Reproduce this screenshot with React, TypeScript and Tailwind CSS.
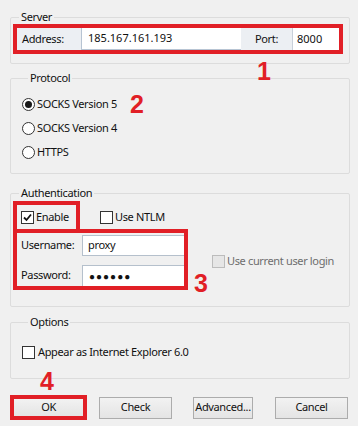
import React from 'react';

const RED = 'border-[#e11f26]';

function Check({ checked, disabled }: { checked?: boolean; disabled?: boolean }) {
    return (
        <span
            className={`w-[13px] h-[13px] shrink-0 border flex items-center justify-center ${
                disabled ? 'border-[#bcbcbc] bg-[#e6e6e6]' : 'border-[#333] bg-white'
            }`}
        >
            {checked && (
                <svg width="9" height="9" viewBox="0 0 9 9">
                    <path d="M1 4.5 L3.5 7 L8 1.5" fill="none" stroke="#111" strokeWidth="1.8" />
                </svg>
            )}
        </span>
    );
}

function Radio({ checked, label }: { checked?: boolean; label: string }) {
    return (
        <div className="h-[24px] flex items-center">
            <span className="w-[13px] h-[13px] shrink-0 rounded-full border border-[#333] bg-white flex items-center justify-center">
                {checked && <span className="w-[7px] h-[7px] rounded-full bg-[#1a1a1a]" />}
            </span>
            <span className="ml-[2px]">{label}</span>
        </div>
    );
}

function Group({ title, className, children }: { title: string; className?: string; children: React.ReactNode }) {
    return (
        <fieldset className={`ml-[10px] w-[340px] border border-[#dcdcdc] rounded-[2px] ${className ?? ''}`}>
            <legend className="ml-[6px] px-[2px] leading-[14px]">{title}</legend>
            {children}
        </fieldset>
    );
}

function Button({ label, className }: { label: string; className?: string }) {
    return (
        <div
            className={`h-[22px] flex items-center justify-center border border-[#acacac] bg-gradient-to-b from-[#f2f2f2] to-[#e4e4e4] ${className ?? ''}`}
        >
            {label}
        </div>
    );
}

export default function App() {
    return (
        <div className="relative w-[358px] h-[426px] bg-[#f0f0f0] pt-[10px] text-[11px] tracking-[-0.35px] text-[#111] whitespace-nowrap font-['Noto_Sans','Liberation_Sans',sans-serif] overflow-hidden">
            {/* Server */}
            <Group title="Server" className="pl-[2px] pr-[6px] pb-[9px]">
                <div className={`border-4 ${RED} flex h-[30px]`}>
                    <div className="w-[64px] bg-[#eceff3] flex items-center pl-[5px]">Address:</div>
                    <div className="w-[160px] bg-white border-l border-b border-[#b7c4d3] flex items-center pl-[6px] tracking-[0px]">
                        185.167.161.193
                    </div>
                    <div className="w-[51px] bg-[#eceff3] flex items-center justify-center">Port:</div>
                    <div className="flex-1 bg-white border-l border-[#c8d0da] flex items-center pl-[4px] tracking-[0px]">8000</div>
                </div>
            </Group>

            {/* Protocol */}
            <Group title="Protocol" className="mt-[7px] pl-[11px] pt-[7px] pb-[9px]">
                <Radio checked label="SOCKS Version 5" />
                <Radio label="SOCKS Version 4" />
                <Radio label="HTTPS" />
            </Group>

            {/* Authentication */}
            <Group title="Authentication" className="mt-[12px] pl-[2px] pt-[1px] pb-[16px]">
                <div className="flex items-start">
                    <div className={`w-[67px] h-[28px] border-t-4 border-l-4 border-r-4 ${RED} flex items-center pl-[4px]`}>
                        <Check checked />
                        <span className="ml-[2px]">Enable</span>
                    </div>
                    <div className="ml-[20px] mt-[4px] h-[24px] flex items-center">
                        <Check />
                        <span className="ml-[2px]">Use NTLM</span>
                    </div>
                </div>
                <div className="flex items-center">
                    <div className={`w-[175px] border-4 ${RED} pt-[2px] flex flex-col gap-[9px]`}>
                        <div className="flex h-[21px]">
                            <div className="w-[65px] flex items-center pl-[4px]">Username:</div>
                            <div className="flex-1 bg-white border border-[#b5c0cc] border-r-0 flex items-center pl-[5px]">proxy</div>
                        </div>
                        <div className="flex h-[21px]">
                            <div className="w-[65px] flex items-center pl-[4px]">Password:</div>
                            <div className="flex-1 bg-white border border-[#b5c0cc] border-r-0 border-b-0 flex items-center pl-[6px] tracking-[1px] text-[10px]">
                                ●●●●●●
                            </div>
                        </div>
                    </div>
                    <div className="ml-[24px] mt-[3px] flex items-center text-[#6d6d6d]">
                        <Check disabled />
                        <span className="ml-[2px]">Use current user login</span>
                    </div>
                </div>
            </Group>

            {/* Options */}
            <Group title="Options" className="mt-[8px] pl-[11px] pt-[11px] pb-[14px]">
                <div className="h-[24px] flex items-center">
                    <Check />
                    <span className="ml-[3px]">Appear as Internet Explorer 6.0</span>
                </div>
            </Group>

            {/* Buttons */}
            <div className="mt-[16px] pl-[10px] flex items-center">
                <div className={`w-[77px] h-[25px] border-4 ${RED} bg-gradient-to-b from-[#f2f2f2] to-[#e4e4e4] flex items-center justify-center`}>
                    OK
                </div>
                <Button label="Check" className="ml-[12px] w-[73px]" />
                <Button label="Advanced..." className="ml-[21px] w-[60px]" />
                <Button label="Cancel" className="ml-[22px] w-[73px]" />
            </div>

            {/* annotation numbers */}
            <div className="absolute left-[257px] top-[59px] text-[25px] leading-none font-black tracking-normal text-[#e11f26] font-['Liberation_Sans',sans-serif]">1</div>
            <div className="absolute left-[130px] top-[92px] text-[25px] leading-none font-black tracking-normal text-[#e11f26] font-['Liberation_Sans',sans-serif]">2</div>
            <div className="absolute left-[194px] top-[271px] text-[25px] leading-none font-black tracking-normal text-[#e11f26] font-['Liberation_Sans',sans-serif]">3</div>
            <div className="absolute left-[40px] top-[369px] text-[25px] leading-none font-black tracking-normal text-[#e11f26] font-['Liberation_Sans',sans-serif]">4</div>
        </div>
    );
}
